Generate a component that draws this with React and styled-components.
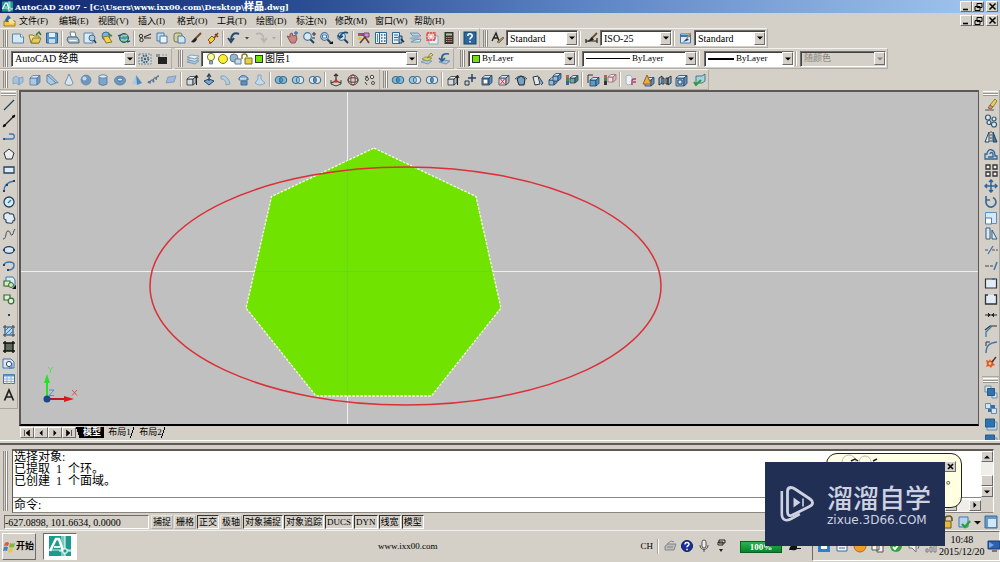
import React from "react";
import styled, { createGlobalStyle, css } from "styled-components";

const face = "#d4d0c8";
const latin = '"Liberation Serif", "Noto Sans CJK SC", serif';

const Global = createGlobalStyle`
  * { box-sizing: border-box; }
  html, body { margin: 0; padding: 0; }
  body { background: ${face}; color: #000; font: 9px/12px ${latin}; }
  button, select, input { font: inherit; color: inherit; margin: 0; }
  button { cursor: pointer; }
  ul { list-style: none; margin: 0; padding: 0; }
`;

const raised = css`
  border: 1px solid;
  border-color: #fff #6b6b6b #6b6b6b #fff;
`;
const sunken = css`
  border: 1px solid;
  border-color: #6b6b6b #fff #fff #6b6b6b;
`;

/* ---------- icons, drawn on a 14 x 14 grid ---------- */

const steel = "#3f77ad";
const navy = "#25425f";
const pale = "#b5d5ee";

const Cube = ({ x = 3, y = 2, s = 6, fill = "#8fbbe0", side = "#5c8fc0", line = navy }) => (
  <g stroke={line} strokeWidth=".8" strokeLinejoin="round">
    <path d={`M${x} ${y + 3}h${s}v${s}h${-s}z`} fill={fill} />
    <path d={`M${x} ${y + 3}l3-2.5h${s}l-3 2.5z`} fill="#dcecf8" />
    <path d={`M${x + s} ${y + 3}l3-2.5v${s}l-3 2.5z`} fill={side} />
  </g>
);

const Lens = ({ children }) => (
  <>
    <path d="M8 8l4 4" stroke="#24405c" strokeWidth="2" />
    <circle cx="5.5" cy="5.5" r="3.8" fill="#d8e9f6" stroke="#4c7698" strokeWidth="1.2" />
    {children}
  </>
);

const Rings = ({ a = pale, b = pale, mid = pale }) => (
  <g stroke="#2f688f">
    <circle cx="4.8" cy="7" r="3.6" fill={a} />
    <circle cx="9.2" cy="7" r="3.6" fill={b} />
    <path d="M7 4.2a3.6 3.6 0 0 1 0 5.6a3.6 3.6 0 0 1 0-5.6z" fill={mid} />
  </g>
);

const icons = {
  page: <><path d="M1.500 3h8l3 3v6h-11z" fill="#d3e9f7" stroke="#5a86a6" /><path d="M9.500 3v3h3" fill="#fff" stroke="#5a86a6" /></>,
  open: <><path d="M1 4h4l1 1h5v7H3z" fill="#f5e58b" stroke="#8b7d33" /><path d="M3 12l2-5h8l-2 5z" fill="#e4cf58" stroke="#8b7d33" /><path d="M8 4l3-3 2 3" fill="none" stroke="#3b6d35" strokeWidth="1.400" /></>,
  save: <><path d="M1.500 2h11v10h-11z" fill="#5b95c7" stroke="#2d5f8c" /><path d="M4 2h6v4H4z" fill="#e3f0f9" /><path d="M4 8h6v4H4z" fill="#c3dcef" /></>,
  print: <><path d="M4 1h5l1 5H5z" fill="#fff" stroke="#667f94" /><path d="M2 6h9l2 3v3H3L1 9z" fill="#a9bfd2" stroke="#4b667e" /><path d="M3.500 9.500h7" stroke="#fff" /></>,
  preview: <><path d="M1 2h9v10H1z" fill="#dcebf6" stroke="#5a86a6" /><circle cx="9" cy="7" r="3" fill="#aecde4" stroke="#41698a" /><path d="M11 9l2 3" stroke="#24405c" strokeWidth="1.600" /></>,
  publish: <><circle cx="6" cy="5" r="4" fill="#7fb3dc" stroke="#3a6d98" /><path d="M3 6l5-1 4 6-6 1z" fill="#f2d24c" stroke="#8f7a20" /><path d="M8 3l4 2" stroke="#3b8a3b" strokeWidth="1.600" /></>,
  globe: <><circle cx="7" cy="7" r="4.500" fill="#4f95a8" stroke="#28546b" /><path d="M4 6c2-3 4 0 6-2M4 9c3-1 4 2 6-1" stroke="#a9dd88" fill="none" strokeWidth="1.400" /><path d="M1 5l3-1M10 11l3-1" stroke="#265a7d" strokeWidth="1.600" /></>,
  cut: <><path d="M6 6l7-3M6 7h7" stroke="#333" strokeWidth="1.200" /><circle cx="3" cy="5" r="1.700" fill="none" stroke="#333" /><circle cx="3.500" cy="9" r="1.700" fill="none" stroke="#333" /></>,
  copy: <><path d="M2 2h7v8H2z" fill="#c5deef" stroke="#4b7ba0" /><path d="M5 5h7v7H5z" fill="#e9f4fb" stroke="#4b7ba0" /></>,
  paste: <><rect x="2" y="2" width="8" height="9" rx="2" fill="#d6cf91" stroke="#6e7d5a" /><path d="M6 5h5l2 2v5H6z" fill="#cde4f4" stroke="#4b7ba0" /></>,
  brush: <><path d="M12 2L6 8" stroke="#7b4a24" strokeWidth="2" /><path d="M7 7c-2 0-3 2-5 4 3 1 5 0 6-3z" fill="#222" /></>,
  block: <><path d="M2 9l4-4 3 3-4 4z" fill="#f3cf3f" stroke="#7b5e13" /><path d="M8 7l4-5M9 3l3 3" stroke="#84411d" strokeWidth="1.500" /><circle cx="4" cy="12" r="1" fill="#b33" /></>,
  undo: <path d="M12 3C7 1 4 4 4 9M1 7l3 4 3-4" fill="none" stroke="#27486d" strokeWidth="2" />,
  redo: <path d="M2 3c5-2 8 1 8 6M7 7l3 4 3-4" fill="none" stroke="#b5b3ad" strokeWidth="1.600" />,
  caret: <path d="M5 6h4l-2 2.500z" fill="#444" />,
  caretDim: <path d="M5 6h4l-2 2.500z" fill="#aaa" />,
  caretLarge: <path d="M4 6h7l-3.500 3.500z" fill="#111" />,
  pan: <><path d="M2 5l3 1V3l2-1 1 3 3-1 1 4-2 4H6z" fill="#c98684" stroke="#8c5556" /><path d="M9 2h4M11 0v4" stroke={steel} strokeWidth="1.300" /></>,
  zoom: <Lens><path d="M10 3h4M12 1v4M10 7h3" stroke="#333" /></Lens>,
  zoomWin: <Lens><path d="M3.500 4h4v3h-4z" fill="#fff" stroke={steel} /><path d="M10 13h4v-3z" fill="#111" /></Lens>,
  zoomPrev: <Lens><path d="M12 2C8 0 5 3 4 6M2 4l2 3 3-2" stroke="#1e4a7c" strokeWidth="1.600" fill="none" /></Lens>,
  props: <><path d="M1 2h3v3H1z" fill="#d8413c" /><path d="M4 2h3v3H4z" fill="#5a55d0" /><path d="M1 6h3v3H1z" fill="#e5c72f" /><path d="M7 2h5v4H7z" fill="#d78fc6" stroke="#76446d" /><path d="M3 12l5-6 4 6" stroke="#6b3d28" strokeWidth="1.600" fill="none" /></>,
  center: <><path d="M1.500 1.500h11v11h-11z" fill="#e6f1fa" stroke="#2f6592" /><path d="M5.500 2v10" stroke="#2f6592" /><path d="M3 4h1M3 6h1M3 8h1M3 10h1M7 4h1.500M10 4h1.500M7 7h1.500M10 7h1.500M7 10h1.500M10 10h1.500" stroke="#2f6592" strokeWidth="1.400" /></>,
  palettes: <><path d="M1.500 1.500h7v11h-7z" fill="#e6f1fa" stroke="#2f6592" /><path d="M3 4h4M3 6.500h4M3 9h4" stroke="#2f6592" /><path d="M8 5h3v7H8z" fill="#8fbbe0" stroke={navy} /><path d="M10 8l3 3" stroke="#222" strokeWidth="1.500" /></>,
  sheets: <><path d="M2 2h8l3 3H5z" fill="#b9d1df" stroke="#7593a5" /><path d="M1 7l7-3 4 3-6 3z" fill="#8fb5cf" /><path d="M3 11h9l1-3-6 1z" fill="#e5eef4" stroke="#7593a5" /></>,
  markup: <><path d="M4 5h9v8H4z" fill="#e6f1fa" stroke="#8ba9bf" /><path d="M2 2h8v7H2z" fill="#fbe3e3" stroke="#dc3a3a" strokeWidth="1.400" strokeDasharray="2.500 .5" /><path d="M4 4h4v3H4z" fill="#fff" stroke="#e58b8b" strokeWidth=".7" /></>,
  calc: <><path d="M2.500 1h9v12h-9z" fill="#3b3330" /><path d="M4 2.500h6v2H4z" fill="#a8c8a0" /><path d="M4 6.500h6M4 8.500h6M4 10.500h6" stroke="#d78d7e" strokeDasharray="1.400 .8" /></>,
  help: <><rect x="1" y="1" width="12" height="12" fill="#2a689f" stroke="#184468" /><path d="M4.800 5c0-3 4.400-2.800 4.400-.3C9.200 6.500 7 6.300 7 8.500M7 10v1.500" fill="none" stroke="#fff" strokeWidth="1.600" /></>,
  textStyle: <><path d="M1 10L5 2l3 8M3 7h4" fill="none" stroke="#222" strokeWidth="1.400" /><path d="M6 11l6-5 1 1-5 5z" fill="#a98b65" stroke="#5e4a31" strokeWidth=".6" /></>,
  dimStyle: <><path d="M1 10h11M1 8v4M12 7v5" stroke="#222" strokeWidth="1.200" /><path d="M6 8l6-6" stroke="#6b4c35" strokeWidth="1.800" /><path d="M2 11l5-5 2 3z" fill="#222" /></>,
  tableStyle: <><path d="M1.500 3h10v9h-10z" fill="#ddecf7" stroke={steel} /><path d="M2 5h9" stroke={steel} strokeWidth="2" /><path d="M4 11l4-4 2 2z" fill="#1f4b78" /><path d="M8 7l4-5" stroke="#c08945" strokeWidth="1.500" /></>,
  gear: <><rect x="1" y="2" width="12" height="10" fill="#cfd6da" stroke="#6e8797" strokeDasharray="2 1" /><circle cx="7" cy="7" r="3.300" fill="#d4d0c8" stroke="#3b5f78" strokeWidth="1.800" strokeDasharray="1.600 1" /><circle cx="7" cy="7" r="1.200" fill="#3b5f78" /></>,
  workspace: <><path d="M3 5h9v7H3z" fill="#222" /><path d="M1 2h4v3H1z" fill="#8b9298" /><path d="M7 3h5" stroke="#8b9298" strokeDasharray="2 1" /></>,
  layers: <g stroke="#6d93b2" strokeWidth=".8"><path d="M1 10l4-2 8 1-4 3z" fill="#a9c8de" /><path d="M1 7.500l4-2 8 1-4 3z" fill="#cfe2ef" /><path d="M1 5l4-2 8 1-4 3z" fill="#e5f0f7" /></g>,
  bulb: <><circle cx="7" cy="5" r="3.600" fill="#fdf9a5" stroke="#6e7d38" /><path d="M5.500 9h3v3h-3z" fill="#9fb3c5" stroke="#4a5e70" strokeWidth=".7" /></>,
  sun: <circle cx="7" cy="7" r="4.500" fill="#f6ef35" stroke="#7d7a1c" />,
  freeze: <><circle cx="6" cy="6" r="4" fill="#9ab6c9" stroke="#607e93" /><path d="M7 7h6v5H7z" fill="#c9dbe6" stroke="#607e93" /></>,
  lock: <><path d="M2 7V4q0-2 2.500-2T7 4v1" fill="none" stroke="#8b7b20" strokeWidth="1.500" /><path d="M5 6h7v6H5z" fill="#e4d34a" stroke="#7d6d18" /></>,
  layerPrev: <g strokeWidth=".8"><path d="M1 10l4-2 7 1-4 3z" fill="#a9c8de" stroke="#6d93b2" /><path d="M2 7l3-2 7 1-4 3z" fill="#d8d36c" stroke="#8b8a34" /><path d="M7 6l4-5 2 2z" fill="#f4e67b" stroke="#7b7328" /></g>,
  layerBack: <><path d="M2 10l4-2 7 1-4 3z" fill="#a9c8de" stroke="#6d93b2" /><path d="M12 2C7 1 4 3 5 8M2 6l3 3 3-3" fill="none" stroke="#2b6291" strokeWidth="1.700" /></>,
  polysolid: <path d="M2 5l3-2 3 2v7l-3-2-3 1zM8 5l4-1v5l-4 3z" fill="#a6c4e2" stroke="#7e9fbd" strokeWidth=".8" />,
  box: <Cube x={2} y={2} s={7} fill="#a9cae6" side="#6f9bc4" line="#54789a" />,
  wedge: <path d="M2 2l9 8-5 2-4-3zM2 2l3-.5 8 8-2 .5" fill="#aacae5" stroke="#4c7394" strokeWidth=".8" />,
  cone: <path d="M7 1l4 9c0 3-8 3-8 0z" fill="#d7e6f2" stroke="#5b7c97" strokeWidth=".8" />,
  sphere: <><circle cx="7" cy="7" r="5" fill="#6f96bd" stroke="#557a9c" strokeWidth=".6" /><circle cx="5.500" cy="5.500" r="2" fill="#c3d9ec" /></>,
  cylinder: <><path d="M3 3v8q4 3 8 0V3z" fill="#7ea6cc" stroke="#4f7596" strokeWidth=".8" /><ellipse cx="7" cy="3.500" rx="4" ry="1.700" fill="#dbe9f4" stroke="#4f7596" strokeWidth=".8" /></>,
  torus: <><ellipse cx="7" cy="7.500" rx="5.500" ry="4.500" fill="#6c97c1" stroke="#50769a" strokeWidth=".7" /><ellipse cx="7" cy="6.500" rx="2.500" ry="1.500" fill="#dce8f1" stroke="#41698c" strokeWidth=".8" /></>,
  pyramid: <><path d="M6 2L2 11l5 1z" fill="#a8cbe8" /><path d="M6 2l6 8-5 2z" fill="#5189bf" /></>,
  helix: <path d="M1 10c1-3 3-1 2 0s1-4 3-3 0 3 0 1 2-4 3-3 0 2 0 1 1-3 3-3" fill="none" stroke="#5b7690" strokeWidth="1.300" />,
  planar: <path d="M4 4l8-1-2 6-8 1z" fill="#9fb9de" stroke="#7893b4" strokeWidth=".8" />,
  extrude: <><Cube x={2} y={3} s={6} fill="#d5dde3" side="#a9b9c6" line="#333" /><path d="M11.500 12V3M10 5l1.500-3L13 5" stroke="#222" fill="none" /></>,
  presspull: <><path d="M2 8l5-2 5 2-5 4z" fill="#7da6cd" stroke={navy} /><path d="M7 8V2M5 4l2-3 2 3" fill="none" stroke={navy} strokeWidth="1.200" /></>,
  sweep: <path d="M2 3c5-1 8 3 9 8l-4 1C7 8 5 6 2 6z" fill="#b4cde3" stroke="#7b98b3" strokeWidth=".8" />,
  revolve: <><path d="M3 5q4-5 9 0v2H3z" fill="#8ab5dc" stroke="#3e6c95" /><path d="M5 8h6v4H5z" fill="#5a92c6" stroke="#3e6c95" /><path d="M4 6h6" stroke="#e4f0f8" strokeWidth="1.200" /></>,
  loft: <path d="M5 2h3v4l4 4q-5 4-10 0l3-4z" fill="#bfd9ef" stroke="#7897b6" strokeWidth=".8" />,
  union: <Rings a="#7fb6d4" b="#7fb6d4" mid="#5b9cc1" />,
  subtract: <Rings a="#9cc6df" b="#e1e5e5" mid="#d4e2ea" />,
  intersect: <Rings a="#dfe3e3" b="#dfe3e3" mid="#5b9cc1" />,
  move3d: <><path d="M2 7v4l5 2 5-2V7" fill="none" stroke="#444" /><path d="M7 8V1M5 3l2-2 2 2M7 8l-5 2M7 8l5 2" stroke="#333" fill="none" strokeWidth="1.200" /><circle cx="7" cy="8" r="1.700" fill="#c33" /></>,
  rotate3d: <g fill="none" stroke="#444"><circle cx="7" cy="7" r="5" /><ellipse cx="7" cy="7" rx="2.200" ry="5" stroke="#9b3b3b" /><ellipse cx="7" cy="7" rx="5" ry="2.200" /></g>,
  align3d: <g stroke="#444" fill="#eee"><path d="M2 4l3-1M2 9l2 3" /><circle cx="4" cy="6" r="1.500" /><circle cx="9" cy="4" r="1.700" /><circle cx="10" cy="10" r="1.500" /></g>,
  moveFace: <><path d="M2 8h4v4H2z" fill={pale} stroke="#333" /><path d="M9 1v8M5 5h8" stroke={navy} strokeWidth="1.500" /></>,
  offsetFace: <><Cube x={2} y={2} s={7} /><path d="M3 6h5v5H3z" fill="#fff" stroke={navy} /></>,
  deleteFace: <><Cube x={2} y={2} s={7} fill="#f2dce1" side="#c8aeb6" /><path d="M3.500 6l4 5M7.500 6l-4 5" stroke="#c33" /></>,
  rotateFace: <><path d="M3 6l4-3 4 3-1 6H5z" fill="#76a2c3" stroke="#222" /><path d="M1 6q6-6 12 0" fill="none" stroke={navy} /></>,
  taper: <><path d="M2 4l5-1 2 8-5 1z" fill="#dfe9ef" stroke="#333" /><path d="M8 4l4 6-2 2" fill="#7faccd" stroke={navy} /></>,
  copyFace: <><Cube x={1} y={4} s={5} /><Cube x={5} y={0} s={5} /></>,
  colorFace: <><Cube x={5} y={2} s={5} fill="#74a693" side="#41816a" /><path d="M1 2h3v3H1z" fill="#c55" /><path d="M1 5h3v3H1z" fill="#3b8d55" /><path d="M1 8h3v4H1z" fill="#3a5f9d" /></>,
  copyEdge: <><Cube x={4} y={4} s={6} fill="#5b9aca" /><path d="M2 10V2h5" fill="none" stroke="#333" /></>,
  colorEdge: <><Cube x={5} y={1} s={5} fill="#f1dce2" side="#e7b5c1" line="#9c6775" /><path d="M1 2h3v3H1z" fill="#c55" /><path d="M1 5h3v3H1z" fill="#3b8d55" /><path d="M1 8h3v4H1z" fill="#333" /></>,
  imprint: <><path d="M2 3l4-1 2 2v7l-4 1-2-2z" fill="#edf0f4" stroke="#9fb5c5" /><path d="M8 12V8q0-2 2-2h2M9 9h3" fill="none" stroke="#b83770" strokeWidth="1.400" /></>,
  clean: <><Cube x={4} y={4} s={6} /><path d="M2 11L6 2l4 9z" fill="#f0a848" stroke="#9e651c" /></>,
  separate: <g fill="#8fb9d9" stroke="#222" strokeWidth=".9"><path d="M1 5l3-2v7l-3 2zM10 5l3-2v7l-3 2zM4 5h2v6H4M8 5h2v6H8z" /></g>,
  shell: <><Cube x={1} y={2} s={8} /><path d="M3 7h4v4H3z" fill="#d5e8f5" stroke={navy} /></>,
  check: <><path d="M4 3h6l3-2v7l-3 2H4z" fill="#a8d2e0" stroke="#437a8d" /><path d="M2 9l2 3 5-5" fill="none" stroke="#2b9b42" strokeWidth="2" /></>,
  line: <path d="M2 12L12 2" stroke={navy} strokeWidth="1.200" />,
  xline: <><path d="M1 13L13 1" stroke="#222" strokeWidth="1.200" /><circle cx="2.500" cy="11.500" r="1.300" /><circle cx="11.500" cy="2.500" r="1.300" /></>,
  pline: <><path d="M2 9h8c3 0 3-5 0-5H7" fill="none" stroke={steel} strokeWidth="1.300" /><circle cx="2" cy="9" r="1.100" fill={navy} /></>,
  polygon: <path d="M7 2l5 4-2 6H4L2 6z" fill="#e8edf1" stroke="#333" />,
  rect: <path d="M2 4h10v6H2z" fill="#dcecf8" stroke={navy} strokeWidth="1.300" />,
  arc: <><path d="M2 12C2 6 6 3 12 2" fill="none" stroke={steel} strokeWidth="1.400" /><path d="M1 11h2v2H1zM4 5h2v2H4zM11 1h2v2h-2z" fill={navy} /></>,
  circle: <><circle cx="7" cy="7" r="5" fill="#d9eaf7" stroke={navy} strokeWidth="1.300" /><path d="M6 8l3-3" stroke={steel} strokeWidth="1.500" /></>,
  cloud: <path d="M4 2q3-1 4 1 4-1 4 3 2 3-1 4 0 3-4 2-4 0-3-3-3-1-2-3-1-3 2-4z" fill="#e0ecf5" stroke="#33485b" strokeWidth="1.200" />,
  spline: <path d="M1 12c4 0 2-8 5-8s2 5 4 4 1-4 3-6" fill="none" stroke="#3c4c59" />,
  ellipse: <><ellipse cx="7" cy="7" rx="5" ry="3.400" fill="#d6e8f5" stroke={navy} strokeWidth="1.200" /><path d="M1 6h2v2H1zM11 6h2v2h-2zM6 3h2v1H6z" fill={navy} /></>,
  ellArc: <><path d="M2 6c1-4 10-4 10 0 0 3-2 5-6 5" fill="none" stroke={steel} strokeWidth="1.500" /><path d="M5 10h2v2H5zM1 5h2v2H1z" fill={navy} /></>,
  insert: <><path d="M4 1h7l2 3v6H4z" fill="#dceaf5" stroke={steel} /><path d="M2 5h6v5H2z" fill="#dcecc5" stroke="#2f6d35" strokeWidth="1.200" /><circle cx="9" cy="9" r="2.500" fill="#cfe4b3" stroke="#2f6d35" /><path d="M10 13h4v-4z" fill="#111" /></>,
  makeBlock: <><path d="M2 3h6v5H2z" fill="#e3eed6" stroke="#2f6d35" strokeWidth="1.200" /><circle cx="9" cy="9" r="2.800" fill="#e3eed6" stroke="#2f6d35" strokeWidth="1.200" /></>,
  point: <rect x="6" y="6" width="2" height="2" fill={navy} />,
  hatch: <><path d="M3 3h8v8H3z" fill={pale} /><path d="M1 3h12M1 11h12M3 1v12M11 1v12" stroke={navy} /><path d="M3 7l4-4M4 10l6-6M7 11l4-4" stroke={steel} /></>,
  gradient: <><path d="M3 3h8v8H3z" fill="#5d6b56" /><path d="M1 3h12M1 11h12M3 1v12M11 1v12" stroke="#111" strokeWidth="1.400" /></>,
  region: <><path d="M1 3h8l3 3v6H1z" fill="#dceaf5" stroke={steel} /><circle cx="7" cy="8" r="2.600" fill="#fff" stroke={navy} /><path d="M10 7v5H7" stroke={steel} fill="none" /></>,
  table: <><path d="M1.500 2.500h11v9h-11z" fill="#f2f7fb" stroke={steel} /><path d="M2 3.500h10" stroke="#5b95c7" strokeWidth="2" /><path d="M5 4v8M9 4v8M2 7h10M2 9.500h10" stroke="#7aa7cf" strokeWidth=".8" /></>,
  mtext: <path d="M2.500 12.500L7 2l4.500 10.500M4.200 9h5.600" fill="none" stroke="#222" strokeWidth="1.700" />,
  erase: <><path d="M1 12h9" stroke="#555" /><path d="M4 10l2-3 3 2-2 2z" fill="#d88" stroke="#844" strokeWidth=".7" /><path d="M6 7l5-6 2 2-4 6z" fill="#e8d256" stroke="#6b5e1e" strokeWidth=".7" /></>,
  copyObj: <g fill="#dce9f3" stroke="#33536f" strokeWidth="1.200"><circle cx="4" cy="3.500" r="2.500" /><circle cx="10" cy="5" r="2" /><circle cx="5" cy="8.500" r="2" /><circle cx="10" cy="10.500" r="2.500" /></g>,
  mirror: <><path d="M5 2v10H1z" fill="#e3eef6" stroke={navy} /><path d="M9 2v10h4z" fill={steel} stroke={navy} /><path d="M7 1v12" stroke="#555" strokeDasharray="2 1" /></>,
  offset: <g fill="none" stroke="#2f659b" strokeWidth="1.300"><path d="M1 12h12V9h-2c0-8-8-8-8-2H1z" /><path d="M4 10h5V7c0-2-3-2-3 0" /></g>,
  array: <path d="M2 2h4v4H2zM9 2h4v4H9zM2 9h4v4H2zM9 9h4v4H9z" fill="#f2f0ea" stroke="#333" strokeWidth="1.300" />,
  move: <path d="M7 1v12M1 7h12M5 3l2-2 2 2M5 11l2 2 2-2M3 5L1 7l2 2M11 5l2 2-2 2" fill="none" stroke="#2f659b" strokeWidth="1.500" />,
  rotate: <path d="M9 2.500A5 5 0 1 1 3 4M2 1v4h4" fill="none" stroke="#3b6c99" strokeWidth="1.700" />,
  scale: <><path d="M1.500 1.500h11v11h-11z" fill="#d6e8f5" stroke="#5e92bd" /><path d="M1.500 7h6v6h-6z" fill="#fff" stroke="#4b7ea8" /></>,
  stretch: <path d="M2 1h4v11H2zM8 3l5 9H8z" fill="#dceaf5" stroke="#345a7c" />,
  trim: <><path d="M1 7h4M8 7h6" stroke="#555" strokeDasharray="3 1" /><path d="M4 11l5-8" stroke={steel} strokeWidth="1.300" /></>,
  extend: <><path d="M1 7h8" stroke="#444" strokeDasharray="4 1" /><path d="M10 11l3-8" stroke={steel} strokeWidth="1.500" /></>,
  breakPt: <><path d="M1.500 3h11v9h-11z" fill="#e0edf7" stroke="#333" strokeWidth="1.200" /><path d="M8 2h3v2H8z" fill={steel} /></>,
  breakObj: <path d="M4 3H1.500v9h11V3H10" fill="#e0edf7" stroke="#333" strokeWidth="1.300" />,
  join: <path d="M1 7h12M4 5l2 2-2 2M10 5L8 7l2 2" fill="#222" stroke="#222" />,
  chamfer: <><path d="M1 6L6 2h7" fill="none" stroke="#333" strokeWidth="1.200" /><path d="M2 13V8l6-6" fill="none" stroke={steel} strokeWidth="1.300" /></>,
  fillet: <><path d="M2 13C2 6 5 3 13 2" fill="none" stroke={steel} strokeWidth="1.500" /><path d="M2 6V2h4" fill="none" stroke="#333" /></>,
  explode: <><path d="M2 4l3 1 1-2 1 2 3-1-1 3 2 2-3 1-1 2-2-2-3 1 1-3z" fill="#e4572c" /><path d="M8 6l4-5" stroke="#4b3528" strokeWidth="1.400" /><circle cx="6" cy="7.500" r="1.300" fill="#fbe072" /></>,
  front: <><path d="M1 1h6v6H1zM8 8h5v5H8z" fill="#d5e4ef" stroke="#6a8ba6" /><path d="M3.500 3.500h7v7h-7z" fill="#2f72ad" stroke="#235a8c" /></>,
  back: <><path d="M4 4h7v7H4z" fill="#2f72ad" /><path d="M1.500 2.500h5v5h-5zM7.500 7.500h5v5h-5z" fill="#d5e4ef" stroke="#6a8ba6" /></>,
  above: <><path d="M3 5h10v8H3z" fill="#c0d6e8" stroke="#6a8ba6" /><path d="M1.500 2h9v8h-9z" fill="#2f72ad" stroke="#235a8c" /></>,
  keyboard: <g fill="#bbb" stroke="#888"><path d="M2 7l3-2h8l-2 6H2z" /><path d="M4 5l4-3 3 1M4 8h6" fill="none" /></g>,
  question: <><circle cx="7" cy="7" r="5.500" fill="#1b2f9a" stroke="#101b60" /><path d="M5 5.500c0-3 4-2.500 4-.3C9 6.800 7 6.500 7 8.300M7 9.700v1.500" fill="none" stroke="#fff" strokeWidth="1.500" /></>,
  mic: <><rect x="5" y="1" width="4" height="8" rx="2" fill="#eee" stroke="#555" /><path d="M3 6c0 6 8 6 8 0M7 10v3" fill="none" stroke="#555" /></>,
  restoreSmall: <><path d="M5 1h6v3H5zM4 3h5v3H4z" fill={face} stroke="#222" /><path d="M5 10h4l-2 3z" fill="#222" /></>,
  plug: <path d="M2 8q2-3 5-2l1-2h2l-1 2h4v1H9v2h4v1H9q-2 2-5 1H1z" fill="#111" />,
  openLock: <><path d="M5 7V4q0-3 4-3 3 0 3 3v2" fill="none" stroke="#6e5a17" strokeWidth="1.700" /><path d="M3 6h8v7H3z" fill="#e2b93b" stroke="#6e5a17" /></>,
  shield: <><path d="M2 2h9v10H2z" fill="#b8d4e9" stroke={steel} /><path d="M5 9l3 3 5-6" fill="none" stroke="#27a33e" strokeWidth="2.400" /></>,
  cleanScreen: <><path d="M1 1h12v12H1z" fill="#6699c9" stroke="#3b6b9b" /><path d="M4 4h8v8H4z" fill="#d1e7f8" /></>,
  monitor: <><path d="M1 2h12v8H1z" fill="#2c5fae" stroke="#1a3b74" /><path d="M2 3l5 3-5 3z" fill="#77a9e3" /><path d="M5 12h5" stroke="#777" strokeWidth="2" /></>,
  appTray: <><path d="M1 1h12v12H1z" fill="#2e7fd0" /><path d="M4 4h6v6H4z" fill="#fff" /></>,
  docTray: <path d="M2 1h10v11H2zM4 9h6" fill="#eef4fa" stroke="#48698b" />,
  orangeTray: <circle cx="7" cy="7" r="6" fill="#ee9d2b" stroke="#b96a16" />,
  copyTray: <path d="M1 2h7v9H1zM6 5h6v8H6z" fill="#f2f2f2" stroke="#555" />,
  okTray: <><circle cx="7" cy="7" r="6" fill="#35a045" /><path d="M4 8l2 2 4-5" stroke="#fff" fill="none" strokeWidth="2" /></>,
  sound: <><path d="M2 5h3l4-4v12L5 9H2z" fill="#eee" stroke="#777" /><path d="M11 4q2 3 0 6" fill="none" stroke="#777" /></>,
  signal: <path d="M1 10h2v3H1zM5 8h2v5H5zM9 6h2v7H9z" fill="#ddd" stroke="#666" strokeWidth=".8" />,
};

const IconSvg = styled.svg`
  display: block;
  flex: none;
  width: 14px;
  height: 14px;
`;
const Icon = ({ name }) => (
  <IconSvg viewBox="0 0 14 14" aria-hidden="true">{icons[name]}</IconSvg>
);

/* ---------- page frame ---------- */

const Page = styled.div`
  position: relative;
  display: flex;
  flex-direction: column;
  min-height: 100vh;
  min-width: 900px;
  overflow: hidden;
`;

const TitleBar = styled.header`
  display: flex;
  align-items: center;
  height: 13px;
  padding: 0 2px;
  gap: 2px;
  background: linear-gradient(90deg, #10286e 0%, #2c4f96 32%, #5c84c4 58%, #a3c7ef 100%);
  color: #fff;
  h1 {
    flex: 1;
    margin: 0;
    font: bold 8px/13px "DejaVu Serif", "Noto Sans CJK SC", serif;
    white-space: nowrap;
  }
  b { font-size: 10px; }
`;

const MenuBar = styled.nav`
  display: flex;
  align-items: center;
  height: 15px;
  padding: 0 2px 0 3px;
  ul { display: flex; flex: 1; margin-left: 3px; }
  li { width: 40px; }
  li:nth-child(even) { width: 39px; }
  a { color: #000; text-decoration: none; white-space: nowrap; }
`;

const WindowButtons = styled.div`
  display: flex;
  button:last-child { margin-left: 2px; }
`;
const WindowButton = styled.button`
  ${raised}
  display: flex;
  align-items: center;
  justify-content: center;
  width: 12px;
  height: 11px;
  padding: 0;
  background: ${face};
`;

const windowGlyphs = {
  最小化: <path d="M1 7.500h5" strokeWidth="1.600" />,
  还原: <path d="M3 1.500h5v4H3zM1 4.500h5v4H1z" />,
  关闭: <path d="M1.500 1.500l6 6M7.500 1.500l-6 6" strokeWidth="1.500" />,
};
const WindowControls = () => (
  <WindowButtons>
    {Object.entries(windowGlyphs).map(([label, glyph]) => (
      <WindowButton key={label} aria-label={label}>
        <svg width="9" height="9" viewBox="0 0 9 9" fill="none" stroke="#000">{glyph}</svg>
      </WindowButton>
    ))}
  </WindowButtons>
);

/* ---------- toolbars ---------- */

const ToolRow = styled.div`
  display: flex;
  gap: ${(p) => p.$gap || 0}px;
  height: ${(p) => p.$height}px;
`;
const ToolBar = styled.div`
  display: flex;
  align-items: center;
  padding-right: 1px;
  border: solid;
  border-width: 1px 1px 1px 0;
  border-color: #f4f2ee #b0aca4 #b0aca4 #fff;
`;
const Grip = styled.span`
  flex: none;
  width: 5px;
  height: 17px;
  margin: 0 1px 0 3px;
  border: solid;
  border-width: 0 1px;
  border-color: #fff #8f8b84;
  background: linear-gradient(90deg, ${face} 1px, #8f8b84 1px 2px, #fff 2px);
`;
const Divider = styled.span`
  flex: none;
  width: ${(p) => p.$width || 4}px;
  height: 15px;
  background: linear-gradient(#a9a59d, #a9a59d) 1px 0 / 1px 100% no-repeat,
    linear-gradient(#fff, #fff) 2px 0 / 1px 100% no-repeat;
`;
const ToolButton = styled.button`
  display: flex;
  flex: none;
  align-items: center;
  justify-content: center;
  width: ${(p) => (p.$narrow ? 10 : 17)}px;
  height: 16px;
  padding: 0;
  border: 0;
  background: none;
`;

const Tools = ({ names }) =>
  names.split(" ").map((name, i) =>
    name === "|" ? (
      <Divider key={i} />
    ) : (
      <ToolButton key={i} aria-label={name} $narrow={name.startsWith("caret")}>
        <Icon name={name} />
      </ToolButton>
    )
  );

const ComboBox = styled.label`
  ${sunken}
  display: flex;
  flex: none;
  align-items: center;
  gap: 2px;
  width: ${(p) => p.$width}px;
  height: 16px;
  margin-left: ${(p) => p.$gap || 0}px;
  padding-left: 3px;
  box-shadow: inset 1px 1px #404040;
  background: ${(p) => (p.$disabled ? face : "#fff")};
  color: ${(p) => (p.$disabled ? "#8a867e" : "#000")};
  select {
    flex: 1;
    min-width: 0;
    padding: 0;
    border: 0;
    outline: 0;
    appearance: none;
    background: none;
    opacity: 1;
    font-size: ${(p) => p.$size || 10}px;
    line-height: 13px;
  }
`;
const ArrowFace = styled.span`
  ${raised}
  display: flex;
  flex: none;
  align-items: center;
  justify-content: center;
  width: 11px;
  height: 13px;
  background: ${face};
`;
const Triangle = ({ dir = "down", color = "#000" }) => {
  const shapes = {
    down: "M1 2.500h6L4 5.500z",
    up: "M1 5.500h6L4 2.500z",
    left: "M5.500 1v6L2.500 4z",
    right: "M2.500 1v6L5.500 4z",
  };
  return (
    <svg width="8" height="8" viewBox="0 0 8 8" aria-hidden="true">
      <path d={shapes[dir]} fill={color} />
    </svg>
  );
};
const Swatch = styled.span`
  flex: none;
  width: 8px;
  height: 8px;
  border: 1px solid #333;
  background: #70e400;
`;
const Stroke = styled.span`
  flex: none;
  width: ${(p) => p.$length}px;
  height: ${(p) => p.$weight}px;
  background: #000;
`;
const LayerStates = styled.span`
  display: flex;
  flex: none;
  span { display: flex; justify-content: center; width: 12px; }
`;

const Combo = ({ label, value, width, gap, size, disabled, children }) => (
  <ComboBox $width={width} $gap={gap} $size={size} $disabled={disabled}>
    {children}
    <select aria-label={label} disabled={disabled} defaultValue={value}>
      <option>{value}</option>
    </select>
    <ArrowFace><Triangle color={disabled ? "#8a867e" : "#000"} /></ArrowFace>
  </ComboBox>
);

/* ---------- work area ---------- */

const Workspace = styled.main`
  display: flex;
  flex: 1 0 350px;
  height: 350px;
  overflow: hidden;
`;
const SideColumn = styled.aside`
  flex: none;
  width: 18px;
  margin: ${(p) => (p.$right ? "0 0 0 3px" : "0 1px 0 0")};
  overflow: hidden;
`;
const SideBar = styled.div`
  display: flex;
  flex-direction: column;
  align-items: center;
  padding-bottom: 5px;
  border: solid;
  border-width: 0 1px 1px 0;
  border-color: #aaa69e;
`;
const SideGrip = styled.span`
  width: 15px;
  height: 5px;
  margin: 1px 0;
  border: solid;
  border-width: 1px 0;
  border-color: #fff #9a968e #9a968e;
  background: linear-gradient(${face} 1px, #9a968e 1px 2px, #fff 2px);
`;
const SideButton = styled(ToolButton)`
  height: ${(p) => (p.$tall ? 17 : 16)}px;
`;
const SideTools = ({ names }) =>
  names.split(" ").map((name, i) => (
    <SideButton key={name} aria-label={name} $tall={i % 8 === 3}>
      <Icon name={name} />
    </SideButton>
  ));

const Center = styled.div`
  display: flex;
  flex: 1;
  flex-direction: column;
  min-width: 0;
`;
const Canvas = styled.section`
  flex: 1;
  min-height: 0;
  border: solid;
  border-width: 2px 1px 2px 2px;
  border-color: #5d5857 #5d5857 #000 #5d5857;
  background: #c0c0c0;
  svg { display: block; width: 100%; height: 100%; }
`;

const heptagon = "M353 56L455 104.500 480 216 410.500 304H295L225 216 250.500 104.500z";

const Drawing = () => (
  <svg aria-label="图形">
    <path d="M326.500 0v400" stroke="#f0f0f0" />
    <line x1="0" x2="100%" y1="179.500" y2="179.500" stroke="#f0f0f0" />
    <path d={heptagon} fill="#70e400" stroke="#a3cf78" />
    <path d={heptagon} fill="none" stroke="#f4ffe2" strokeWidth="1.300" strokeDasharray="2.500 1.500" />
    <path d="M326.500 69v234M235 179.500h236" stroke="#63dd12" />
    <ellipse cx="384.500" cy="194" rx="255.500" ry="119" fill="none" stroke="#dc2f37" strokeWidth="1.500" />
    <g strokeWidth="2" fill="none">
      <path d="M26 306v-19" stroke="#24e324" />
      <path d="M26 307h20" stroke="#c4161c" />
      <path d="M23 291l3-9 3 9z" fill="#24e324" stroke="none" />
      <path d="M43 304l10 3-10 3z" fill="#dc1a1a" stroke="none" />
    </g>
    <circle cx="26" cy="307" r="3.500" fill="#174a86" />
    <g fill="none">
      <path d="M27 275l2.500 3 2.500-3M29.500 278v3" stroke="#4fe34f" />
      <path d="M51 298l5 5.500M56 298l-5 5.500" stroke="#ec4a4a" />
      <path d="M28 298h5l-5 5.500h5" stroke="#4b93cf" />
    </g>
  </svg>
);

const SheetTabs = styled.div`
  display: flex;
  height: 14px;
  align-items: flex-start;
  padding: 1px 0 0 1px;
  font-size: 9px;
`;
const TabStep = styled.button`
  ${raised}
  display: flex;
  align-items: center;
  justify-content: center;
  width: 14px;
  height: 11px;
  padding: 0;
  background: ${face};
`;
const SheetTab = styled.button`
  width: ${(p) => (p.$active ? 24 : 31)}px;
  height: 11px;
  padding: 0;
  border: 0;
  text-align: center;
  line-height: 11px;
  font-weight: ${(p) => (p.$active ? "bold" : "normal")};
  color: ${(p) => (p.$active ? "#fff" : "#000")};
  background: ${(p) =>
    p.$active
      ? "#000"
      : `linear-gradient(108deg, transparent 28px, #000 28px 29px, transparent 29px)`};
`;
const TabSlant = styled.span`
  width: 4px;
  height: 11px;
  background: linear-gradient(70deg, ${face} 45%, #000 45%);
`;

/* ---------- command window ---------- */

const CommandPanel = styled.section`
  display: flex;
  height: 73px;
  padding: 8px 6px 0 3px;
  border-top: 1px solid #fff;
  background: linear-gradient(#5d5a57, #5d5a57) 0 2px / 100% 2px no-repeat;
`;
const CommandGrip = styled(Grip)`
  height: 60px;
  margin: 2px 4px 0 0;
`;
const CommandBody = styled.div`
  flex: 1;
  display: grid;
  grid-template: 46px 15px / 1fr 12px;
  border: solid;
  border-width: 2px 1px 1px;
  border-color: #5d5a57 #fff #8a8780 #5d5a57;
  background: #fff;
  font: 12px/12px ${latin};
`;
const Log = styled.div`
  p { margin: 0; padding-left: 1px; white-space: pre; }
`;
const Prompt = styled.label`
  display: flex;
  align-items: center;
  padding-left: 1px;
  border-top: 1px solid #8a8780;
  input { flex: 1; min-width: 0; height: 12px; padding: 0; border: 0; outline: 0; background: none; }
`;
const VerticalScroll = styled.div`
  display: flex;
  flex-direction: column;
  background: #f0eee9;
`;
const ScrollButton = styled.button`
  ${raised}
  display: flex;
  align-items: center;
  justify-content: center;
  width: 12px;
  height: 11px;
  margin-top: ${(p) => (p.$push ? "auto" : 0)};
  padding: 0;
  background: ${face};
`;
const HorizontalScroll = styled.div`
  display: flex;
  width: 36px;
  justify-content: space-between;
  background: #f0eee9;
`;
const Corner = styled.div`
  background: ${face};
`;

/* ---------- status bar ---------- */

const StatusBar = styled.footer`
  display: flex;
  align-items: center;
  height: 18px;
  padding: 1px 1px 0 4px;
  gap: 1px;
  border-bottom: 1px solid #f2f0ec;
`;
const Coordinates = styled.output`
  ${sunken}
  width: 145px;
  height: 14px;
  margin-right: 1px;
  font-size: 10px;
  line-height: 14px;
`;
const ModeButton = styled.button`
  ${(p) => (p.$on ? sunken : raised)}
  ${(p) => p.$on ? "border-color: #333 #fff #fff #333;" : "border-color: #e8e5df #b3afa7 #b3afa7 #e8e5df;"}
  height: 14px;
  padding: 0 1px;
  background: ${face};
  line-height: 12px;
  white-space: nowrap;
`;
const StatusTray = styled.div`
  display: flex;
  align-items: center;
  margin-left: auto;
`;

const modes = [
  ["捕捉", false], ["栅格", false], ["正交", true], ["极轴", false], ["对象捕捉", true],
  ["对象追踪", true], ["DUCS", true], ["DYN", true], ["线宽", true], ["模型", true],
];

/* ---------- task bar ---------- */

const TaskBar = styled.footer`
  display: flex;
  align-items: center;
  height: 31px;
  padding: 0 0 1px 2px;
`;
const StartButton = styled.button`
  ${raised}
  display: flex;
  align-items: center;
  gap: 1px;
  width: 34px;
  height: 27px;
  padding: 0;
  background: ${face};
  font-weight: bold;
  white-space: nowrap;
`;
const TaskButton = styled.button`
  ${sunken}
  display: flex;
  align-items: center;
  justify-content: center;
  width: 34px;
  height: 27px;
  margin-left: 7px;
  padding: 0;
  background: #fff;
`;
const Site = styled.a`
  margin-left: 301px;
  color: #000;
  text-decoration: none;
`;
const Language = styled.div`
  display: flex;
  align-items: center;
  gap: 3px;
  margin-left: auto;
`;
const Battery = styled.span`
  width: 42px;
  height: 12px;
  margin: 1px 6px 0 12px;
  border: 1px solid #0b5e20;
  background: linear-gradient(#2fb14c, #07852a);
  color: #fff;
  font: bold 9px/11px "Liberation Serif", serif;
  text-align: center;
`;
const Tray = styled.div`
  ${sunken}
  display: flex;
  align-items: center;
  width: 188px;
  height: 30px;
  margin-left: 10px;
`;
const TrayIcons = styled.div`
  display: flex;
  gap: 4px;
  margin: 0 auto 0 4px;
`;
const Clock = styled.time`
  margin-right: 2px;
  text-align: center;
  font-size: 10px;
`;
const DesktopButton = styled.button`
  flex: none;
  width: 14px;
  height: 14px;
  padding: 0;
  border: 0;
  background: none;
`;

const AppLogo = ({ size }) => (
  <svg width={size} height={size} viewBox="0 0 22 22" aria-hidden="true">
    <path d="M0 1h22v20H0z" fill="#1c9a8b" />
    <path d="M12 1h4v20h-4zM0 14h22v2H0z" fill="#76c8bd" />
    <path d="M1 16L7 4h3l4 12" fill="none" stroke="#fff" strokeWidth="2.500" />
    <path d="M5 12h6" stroke="#d9f2ee" strokeWidth="2" />
    <path d="M16 1v20M10 16h12" stroke="#fff" />
    <path d="M14 14h4v4h-4z" fill="#1c9a8b" stroke="#fff" />
  </svg>
);
const Flag = () => (
  <svg width="12" height="13" viewBox="0 0 12 13" aria-hidden="true">
    <path d="M2 3q2-2 4 0L5 6Q3 5 1 6z" fill="#e4572c" />
    <path d="M7 3q2 1 5 0l-1 4q-2 1-5 0z" fill="#7fb83c" />
    <path d="M1 7q2-1 4 0l-1 4q-2-1-4 0z" fill="#3c82cf" />
    <path d="M6 8q2 1 4 0l-1 4q-2 1-4 0z" fill="#f5c531" />
  </svg>
);
const MenuLogo = () => (
  <svg width="13" height="13" viewBox="0 0 13 13" aria-hidden="true">
    <path d="M1 7h11v5H1z" fill="#f1c644" stroke="#a97e16" />
    <path d="M2 6l3-5 3 3 1 4H3z" fill="#2d62a6" />
    <path d="M5 6l3-2 4 5-5 1z" fill="#f8e394" />
  </svg>
);

/* ---------- overlays ---------- */

const Balloon = styled.div`
  position: absolute;
  right: 38px;
  bottom: 54px;
  width: 136px;
  height: 55px;
  border: 1px solid #222;
  border-radius: 11px;
  background: #ffffe1;
  p { position: absolute; right: 4px; top: 20px; margin: 0; font-size: 11px; }
`;
const BalloonArt = styled.svg`
  position: absolute;
  left: 12px;
  top: 0;
`;
const BalloonClose = styled.button`
  ${raised}
  position: absolute;
  right: 5px;
  top: 7px;
  display: flex;
  align-items: center;
  justify-content: center;
  width: 12px;
  height: 11px;
  padding: 0;
  background: ${face};
`;
const Brand = styled.div`
  position: absolute;
  right: 55px;
  bottom: 16px;
  display: flex;
  align-items: center;
  gap: 12px;
  width: 180px;
  height: 84px;
  padding-left: 15px;
  background: #222f55;
  color: #ced2e0;
  strong { display: block; font: 500 26px/30px "Noto Sans CJK SC", sans-serif; white-space: nowrap; }
  span { display: block; margin-top: 1px; font: 12px/14px "DejaVu Sans", sans-serif; white-space: nowrap; }
`;

const menus = ["文件(F)", "编辑(E)", "视图(V)", "插入(I)", "格式(O)", "工具(T)", "绘图(D)", "标注(N)", "修改(M)", "窗口(W)", "帮助(H)"];

export default function App() {
  return (
    <>
      <Global />
      <Page>
        <TitleBar>
          <AppLogo size={11} />
          <h1>AutoCAD 2007 - [C:\Users\www.ixx00.com\Desktop\<b>样品</b>.dwg]</h1>
          <WindowControls />
        </TitleBar>
        <MenuBar>
          <MenuLogo />
          <ul>
            {menus.map((m) => (
              <li key={m}><a href="#menu">{m}</a></li>
            ))}
          </ul>
          <WindowControls />
        </MenuBar>

        <ToolRow $height={20}>
          <ToolBar>
            <Grip />
            <Tools names="page open save | print preview publish globe | cut copy paste brush block | undo caret redo caretDim | pan zoom zoomWin zoomPrev | props center palettes sheets markup calc | help" />
          </ToolBar>
          <ToolBar>
            <Grip />
            <Tools names="textStyle" />
            <Combo label="文字样式" value="Standard" width={72} />
            <Divider $width={5} />
            <Tools names="dimStyle" />
            <Combo label="标注样式" value="ISO-25" width={72} />
            <Divider $width={5} />
            <Tools names="tableStyle" />
            <Combo label="表格样式" value="Standard" width={72} />
          </ToolBar>
        </ToolRow>

        <ToolRow $height={21} $gap={3}>
          <ToolBar>
            <Grip />
            <Combo label="工作空间" value="AutoCAD 经典" width={125} gap={2} />
            <Tools names="gear workspace" />
          </ToolBar>
          <ToolBar>
            <Grip />
            <Tools names="layers" />
            <Combo label="图层" value="图层1" width={217}>
              <LayerStates>
                {["bulb", "sun", "freeze", "lock"].map((n) => (
                  <span key={n}><Icon name={n} /></span>
                ))}
              </LayerStates>
              <Swatch />
            </Combo>
            <Tools names="layerPrev layerBack" />
          </ToolBar>
          <ToolBar>
            <Grip />
            <Combo label="颜色" value="ByLayer" width={108} gap={2} size={9}>
              <Swatch />
            </Combo>
            <Divider $width={6} />
            <Combo label="线型" value="ByLayer" width={115} size={9}>
              <Stroke $length={44} $weight={1} />
            </Combo>
            <Divider $width={7} />
            <Combo label="线宽" value="ByLayer" width={90} size={9}>
              <Stroke $length={26} $weight={2} />
            </Combo>
            <Divider $width={6} />
            <Combo label="打印样式" value="随颜色" width={86} size={9} disabled />
          </ToolBar>
        </ToolRow>

        <ToolRow $height={21}>
          <ToolBar>
            <Grip />
            <Tools names="polysolid box wedge cone sphere cylinder torus pyramid helix planar | extrude presspull sweep revolve loft | union subtract intersect | move3d rotate3d align3d" />
          </ToolBar>
          <ToolBar>
            <Grip />
            <Tools names="union subtract intersect | extrude moveFace offsetFace deleteFace rotateFace taper copyFace colorFace | copyEdge colorEdge | imprint clean separate shell check" />
          </ToolBar>
        </ToolRow>

        <Workspace>
          <SideColumn>
            <SideBar>
              <SideGrip />
              <SideTools names="line xline pline polygon rect arc circle cloud spline ellipse ellArc insert makeBlock point hatch gradient region table mtext" />
            </SideBar>
          </SideColumn>
          <Center>
            <Canvas><Drawing /></Canvas>
            <SheetTabs>
              <TabStep aria-label="首个"><svg width="8" height="8"><path d="M1.500 1v6M6.500 1v6L3 4z" stroke="#000" strokeWidth=".6" /></svg></TabStep>
              <TabStep aria-label="上一个"><Triangle dir="left" /></TabStep>
              <TabStep aria-label="下一个"><Triangle dir="right" /></TabStep>
              <TabStep aria-label="末个"><svg width="8" height="8"><path d="M6.500 1v6M1.500 1v6L5 4z" stroke="#000" strokeWidth=".6" /></svg></TabStep>
              <TabSlant />
              <SheetTab $active>模型</SheetTab>
              <SheetTab>布局1</SheetTab>
              <SheetTab>布局2</SheetTab>
            </SheetTabs>
          </Center>
          <SideColumn $right>
            <SideBar>
              <SideGrip />
              <SideTools names="erase copyObj mirror offset array move rotate scale stretch trim extend breakPt breakObj join chamfer fillet explode" />
            </SideBar>
            <SideBar>
              <SideGrip />
              <SideTools names="front back above" />
              <SideButton aria-label="below"><Icon name="above" /></SideButton>
            </SideBar>
          </SideColumn>
        </Workspace>

        <CommandPanel>
          <CommandGrip />
          <CommandBody>
            <Log>
              <p>选择对象:</p>
              <p>已提取  1  个环。</p>
              <p>已创建  1  个面域。</p>
            </Log>
            <VerticalScroll>
              <ScrollButton aria-label="向上"><Triangle dir="up" /></ScrollButton>
              <ScrollButton aria-label="滑块" $push />
              <ScrollButton aria-label="向下"><Triangle /></ScrollButton>
            </VerticalScroll>
            <Prompt>
              命令:
              <input aria-label="命令" />
              <HorizontalScroll>
                <ScrollButton aria-label="水平滑块" />
                <ScrollButton aria-label="向右"><Triangle dir="right" /></ScrollButton>
              </HorizontalScroll>
            </Prompt>
            <Corner />
          </CommandBody>
        </CommandPanel>

        <StatusBar>
          <Coordinates>-627.0898, 101.6634, 0.0000</Coordinates>
          {modes.map(([name, on]) => (
            <ModeButton key={name} $on={on} aria-pressed={on}>{name}</ModeButton>
          ))}
          <StatusTray>
            <Tools names="openLock shield caretLarge cleanScreen" />
          </StatusTray>
        </StatusBar>

        <TaskBar>
          <StartButton><Flag />开始</StartButton>
          <TaskButton aria-label="AutoCAD"><AppLogo size={22} /></TaskButton>
          <Site href="#site">www.ixx00.com</Site>
          <Language>
            CH
            <Divider />
            <Icon name="keyboard" />
            <Icon name="question" />
            <Icon name="mic" />
            <Icon name="restoreSmall" />
          </Language>
          <Battery>100%</Battery>
          <Icon name="plug" />
          <Tray>
            <TrayIcons>
              {["appTray", "docTray", "orangeTray", "copyTray", "okTray", "sound", "signal"].map((n) => (
                <Icon key={n} name={n} />
              ))}
            </TrayIcons>
            <Clock>10:48<br />2015/12/20</Clock>
            <DesktopButton aria-label="显示桌面"><Icon name="monitor" /></DesktopButton>
          </Tray>
        </TaskBar>

        <Balloon>
          <BalloonArt width="60" height="8" viewBox="0 0 60 8" fill="none" stroke="#bbb" aria-hidden="true">
            <circle cx="10" cy="8" r="7" />
            <circle cx="26" cy="8" r="6" />
            <path d="M12 7l4-2 3 2M34 7l4-2" stroke="#222" strokeWidth="1.500" />
          </BalloonArt>
          <p>。</p>
          <BalloonClose aria-label="关闭提示">
            <svg width="7" height="7" viewBox="0 0 7 7" stroke="#000" strokeWidth="1.600"><path d="M1 1l5 5M6 1L1 6" /></svg>
          </BalloonClose>
        </Balloon>
        <Brand>
          <svg width="35" height="36" viewBox="0 0 35 36" fill="none" stroke="#ced2e0" aria-hidden="true">
            <path d="M11 1.500c-2 0-3.500 1.500-3.500 4v20c0 4 2 5 5 3.500l17-8.500c4-2 4-5 .5-7.500L15 3C13.500 2 12 1.500 11 1.500z" strokeWidth="2.800" />
            <path d="M1.800 5v23c0 6 4 7.500 9 5l9-5" strokeWidth="2.600" />
            <path d="M13.500 11.500v10l7-5z" fill="#ced2e0" stroke="none" />
            <path d="M23 12.500v8" strokeWidth="1.600" />
          </svg>
          <div>
            <strong>溜溜自学</strong>
            <span>zixue.3D66.COM</span>
          </div>
        </Brand>
      </Page>
    </>
  );
}
